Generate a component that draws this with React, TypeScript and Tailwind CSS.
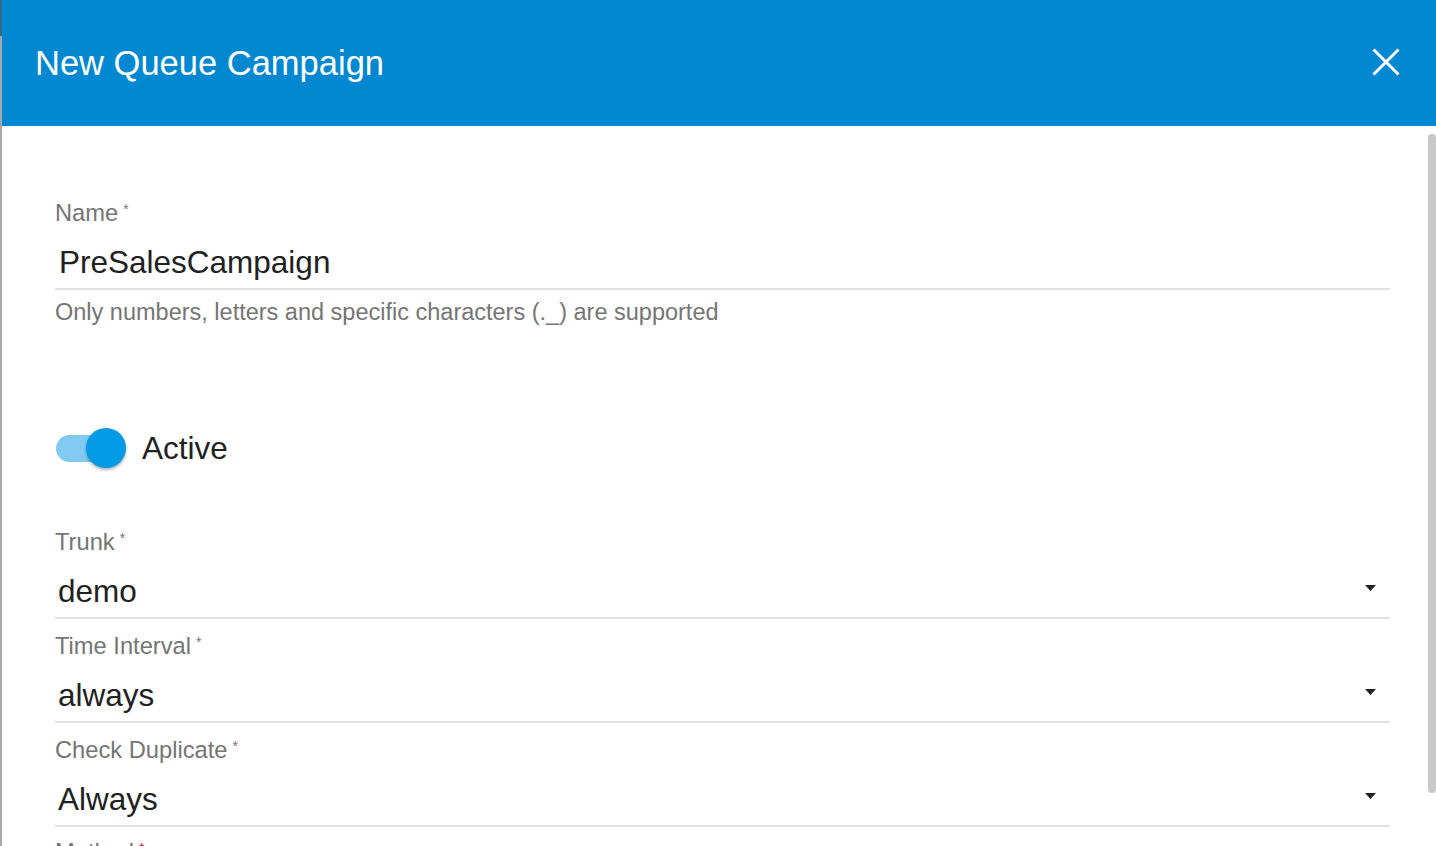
import React from 'react';

const font = { fontFamily: '"Liberation Sans", Arial, Helvetica, sans-serif' };

function Label({ text, requiredColor = 'text-[#757575]' }: { text: string; requiredColor?: string }) {
  return (
    <div className="h-[28px] leading-[28px] text-[23.7px] text-[#757575] whitespace-nowrap">
      {text}
      <span className={`inline-block align-top pt-[3px] ml-[5px] text-[14px] leading-none ${requiredColor}`}>*</span>
    </div>
  );
}

function SelectField({ label, value, requiredColor }: { label: string; value: string; requiredColor?: string }) {
  return (
    <div className="mt-[13px] first:mt-0">
      <Label text={label} requiredColor={requiredColor} />
      <div className="mt-[15px] flex items-center pb-[6px] border-b-2 border-[#e2e2e2]">
        <div className="flex-1 pl-[3px] h-[40px] leading-[40px] text-[31.5px] text-[#212121]">{value}</div>
        {/* caret */}
        <svg width="11" height="6" viewBox="0 0 11 6" className="mr-[14px] -mt-[6px]">
          <path d="M0 0h11L5.5 6z" fill="#222" />
        </svg>
      </div>
    </div>
  );
}

export default function App() {
  return (
    <div className="flex w-[1436px] h-[846px] overflow-hidden bg-white" style={font}>
      {/* backdrop edge */}
      <div className="w-[2px] shrink-0 flex flex-col">
        <div className="h-[36px] bg-[#2f6d8c]" />
        <div className="flex-1 bg-[#a7a7a7]" />
      </div>

      <div className="flex-1 flex flex-col min-h-0">
        {/* Header */}
        <div className="h-[126px] shrink-0 bg-[#0288d1] flex items-center justify-between pl-[33px] pr-[36px]">
          <h2 className="text-[34.5px] leading-[40px] text-white">New Queue Campaign</h2>
          <button aria-label="Close" className="w-[28px] h-[28px] -mt-[2px]">
            <svg width="28" height="28" viewBox="0 0 28 28">
              <path d="M1.5 1.5L26.5 26.5M26.5 1.5L1.5 26.5" stroke="white" strokeWidth="3" />
            </svg>
          </button>
        </div>

        {/* Body */}
        <div className="relative flex-1 min-h-0 overflow-hidden">
          <div className="pl-[53px] pr-[46px] pt-[73px]">
            {/* Name */}
            <Label text="Name" />
            <div className="mt-[15px] pb-[6px] border-b-2 border-[#e2e2e2]">
              <div className="pl-[4px] h-[40px] leading-[40px] text-[31.5px] text-[#212121]">PreSalesCampaign</div>
            </div>
            <div className="mt-[8px] h-[28px] leading-[28px] text-[23.5px] text-[#757575] whitespace-nowrap">
              Only numbers, letters and specific characters (._) are supported
            </div>

            {/* Active switch */}
            <div className="mt-[102px] flex items-center">
              <div className="relative w-[71px] h-[40px]">
                <div className="absolute left-[1px] top-[7px] w-[66px] h-[27px] rounded-full bg-[#81caf0]" />
                <div className="absolute right-0 top-0 w-[40px] h-[40px] rounded-full bg-[#039be5] shadow-[0_2px_3px_rgba(0,0,0,0.3)]" />
              </div>
              <span className="ml-[16px] text-[31.5px] leading-[40px] text-[#212121]">Active</span>
            </div>

            <div className="mt-[60px]">
              <SelectField label="Trunk" value="demo" />
              <SelectField label="Time Interval" value="always" />
              <SelectField label="Check Duplicate" value="Always" />
              <div className="mt-[11px]">
                <Label text="Method" requiredColor="text-[#e00000]" />
              </div>
            </div>
          </div>

          {/* scrollbar */}
          <div className="absolute right-[0px] top-[8px] w-[8px] h-[659px] rounded-full bg-[#c8c8c8]" />
        </div>
      </div>
    </div>
  );
}
